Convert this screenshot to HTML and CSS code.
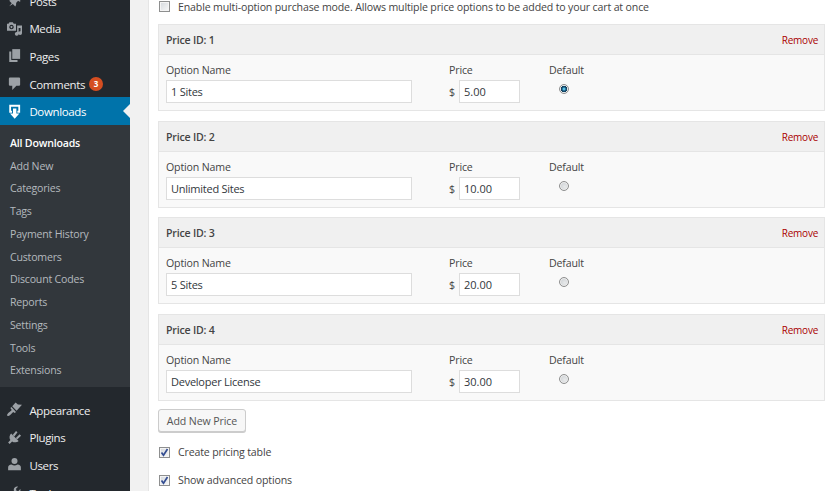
FILE: index.html
```html
<!DOCTYPE html>
<html lang="en">
<head>
<meta charset="utf-8">
<title>Downloads</title>
<link rel="stylesheet" href="styles.css">
</head>
<body>
<div class="app">
  <nav class="sidebar">
    <a class="item"><svg class="ico" viewBox="0 0 20 20"><path d="M10.4 3l-1 1.6 1.3 1.9-3 2.7c-1.700-.4-3.500.1-4.700 1.100l3.300 3.200L3 17.500l4.800-2.700 3.200 3.300c1.100-1.300 1.500-3 1.100-4.700l2.700-3 1.900 1.300 1.600-1z"/></svg><span>Posts</span></a>
    <a class="item"><svg class="ico" viewBox="0 0 20 20"><path fill-rule="evenodd" d="M0 3.500h2L3.300 1.500h4.400L9 3.500h3V13H0zM6 5a3 3 0 1 0 .01 0zM6 6.700a1.300 1.300 0 1 1-.01 0z"/><path d="M13.500 6H20v10a2.500 2.500 0 1 1-2-2.400V9.200h-2.500V17a2.500 2.500 0 1 1-2-2.400z"/></svg><span>Media</span></a>
    <a class="item"><svg class="ico" viewBox="0 0 20 20"><path d="M7 1.500H17.500v13H7z"/><path d="M3 4.500h2.700v11.500H14V18.500H3z"/></svg><span>Pages</span></a>
    <a class="item"><svg class="ico" viewBox="0 0 20 20"><path d="M4 2h12q1.500 0 1.500 1.500v8Q17.500 13 16 13h-3.500L7 18.500V13H4q-1.500 0-1.500-1.500v-8Q2.500 2 4 2z"/></svg><span>Comments</span><b class="badge">3</b></a>
    <a class="item current"><svg class="ico" viewBox="0 0 20 20"><path d="M3 1h14.500v10.500h-3.700V9h1.300V3.500H5.400V9h1.300v2.500H3z"/><path d="M8 6h4.500v6.500h4L10.250 19.500 4 12.500h4z"/></svg><span>Downloads</span></a>
    <div class="submenu">
      <a class="on">All Downloads</a><a>Add New</a><a>Categories</a><a>Tags</a><a>Payment History</a><a>Customers</a><a>Discount Codes</a><a>Reports</a><a>Settings</a><a>Tools</a><a>Extensions</a>
    </div>
    <a class="item"><svg class="ico" viewBox="0 0 20 20"><path d="M7 5.500L11.500.5l3 2.700L20 3.500l-7.200 8.200z"/><path d="M6 6.600l6 6.600-1.700 1.500-2-1.500C6 15 4 18 1.800 18.800c-1.500.2-2.300-1-1.500-2.300C1.800 14 5 12.800 6.300 10.800L4.500 8z"/></svg><span>Appearance</span></a>
    <a class="item"><svg class="ico" viewBox="0 0 20 20"><path d="M5.500 4.500l10 10c-2.500 2.200-6 2.600-8.700.8L3.500 18.500 1.500 16.500l3-3.200C2.700 10.500 3 7 5.500 4.500z"/><path d="M7.500 6.500l4.500-5.200 2 1.800L9.800 8.500zM11.800 10.500l5-4.700 1.900 2-5.200 4.700z"/></svg><span>Plugins</span></a>
    <a class="item"><svg class="ico" viewBox="0 0 20 20"><circle cx="10" cy="5.300" r="4"/><path d="M1.500 17.500v-3.500q0-3.500 4.500-4 4 2.500 8 0 4.500 .5 4.500 4v3.500z"/></svg><span>Users</span></a>
    <a class="item"><svg class="ico" viewBox="0 0 20 20"><path d="M16.700 9.500c-1.300 1.300-3 1.600-4.600 1L5.500 17.500c-1 1-2 1-3 0s-1-2 0-3L9.300 8C8.700 6.300 9 4.600 10.300 3.300c1.200-1.200 2.900-1.600 4.400-1.100L12 5l.6 2.500 2.500.6 2.700-2.800c.5 1.500.1 3-1.100 4.200z"/></svg><span>Tools</span></a>
  </nav>
  <main class="panel">
    <label class="check first"><i class="box"></i><span class="long">Enable multi-option purchase mode. Allows multiple price options to be added to your cart at once</span></label>
    <section class="price">
      <header><b>Price ID: 1</b><a>Remove</a></header>
      <div class="row">
        <div class="c1"><label>Option Name</label><div class="input">1 Sites</div></div>
        <div class="c2"><label>Price</label><div class="amt"><span>$</span><div class="input">5.00</div></div></div>
        <div class="c3"><label>Default</label><i class="radio sel"></i></div>
      </div>
    </section>
    <section class="price">
      <header><b>Price ID: 2</b><a>Remove</a></header>
      <div class="row">
        <div class="c1"><label>Option Name</label><div class="input">Unlimited Sites</div></div>
        <div class="c2"><label>Price</label><div class="amt"><span>$</span><div class="input">10.00</div></div></div>
        <div class="c3"><label>Default</label><i class="radio"></i></div>
      </div>
    </section>
    <section class="price">
      <header><b>Price ID: 3</b><a>Remove</a></header>
      <div class="row">
        <div class="c1"><label>Option Name</label><div class="input">5 Sites</div></div>
        <div class="c2"><label>Price</label><div class="amt"><span>$</span><div class="input">20.00</div></div></div>
        <div class="c3"><label>Default</label><i class="radio"></i></div>
      </div>
    </section>
    <section class="price">
      <header><b>Price ID: 4</b><a>Remove</a></header>
      <div class="row">
        <div class="c1"><label>Option Name</label><div class="input">Developer License</div></div>
        <div class="c2"><label>Price</label><div class="amt"><span>$</span><div class="input">30.00</div></div></div>
        <div class="c3"><label>Default</label><i class="radio"></i></div>
      </div>
    </section>
    <div class="button">Add New Price</div>
    <label class="check second"><i class="box"><svg viewBox="0 0 9 9"><path d="M1.500 4.500l2 2.800L7.500 1"/></svg></i><span>Create pricing table</span></label>
    <label class="check third"><i class="box"><svg viewBox="0 0 9 9"><path d="M1.500 4.500l2 2.800L7.500 1"/></svg></i><span>Show advanced options</span></label>
  </main>
</div>
</body>
</html>
```
FILE: styles.css
```css
* { box-sizing: border-box; }
body { margin: 0; background: #f1f1f1; font-family: "Open Sans", "Noto Sans", sans-serif; font-size: 10.6px; letter-spacing: -0.155px; color: #444; }
.app { display: flex; height: 491px; overflow: hidden; white-space: nowrap; }
.sidebar { width: 130px; flex: none; background: #23282d; margin-top: -13px; }
.item { display: flex; align-items: center; height: 27.6px; padding-left: 7px; color: #eee; font-size: 11.5px; letter-spacing: -0.36px; position: relative; }
.item span { padding-top: 1px; }
.ico { width: 15px; height: 15px; margin-right: 7.4px; fill: #9ca1a6; flex: none; }
.badge { width: 14px; height: 14px; border-radius: 7px; background: #d54e21; color: #fff; font-size: 8px; line-height: 14px; text-align: center; margin-left: 4px; letter-spacing: 0; }
.current { background: #0073aa; color: #fff; }
.current .ico { fill: #fff; }
.current::after { content: ""; position: absolute; right: 0; top: 7px; border: 7px solid transparent; border-right-color: #f1f1f1; border-left: 0; }
.submenu { background: #32373c; height: 262px; padding: 7px 0 0 10px; margin-bottom: 9px; }
.submenu a { display: block; height: 22.75px; line-height: 22.75px; color: #b4b9be; font-size: 10.6px; letter-spacing: -0.2px; }
.submenu .on { color: #fff; font-weight: 600; }
.panel { margin-left: 18px; flex: 1; border-left: 1px solid #e5e5e5; background: #fff; padding: 0 3px 0 9px; }
.check { display: flex; align-items: center; height: 14px; padding-left: 1px; }
.check span { margin-left: 8px; }
.box { width: 11px; height: 11px; border: 1px solid #8e8f8f; background: linear-gradient(135deg, #d4d8dc, #f8f8f8); box-shadow: inset 0 0 0 1px #f4f4f4; display: flex; flex: none; }
.box svg { width: 9px; height: 9px; fill: none; stroke: #344d91; stroke-width: 1.7; }
.first { margin-top: -1px; margin-bottom: 11px; }
.first span { padding-top: 1px; }
.price { height: 87px; border: 1px solid #e5e5e5; background: #f9f9f9; margin-bottom: 9.6px; }
.price header { display: flex; align-items: center; justify-content: space-between; height: 30px; border-bottom: 1px solid #e5e5e5; background: #f0f0f0; padding: 1px 6px 0 7px; }
.price b { font-weight: 600; letter-spacing: -0.2px; }
.price header a { color: #a00; font-size: 10px; letter-spacing: -0.25px; }
.row { display: flex; padding: 8px 7px 0; }
.row label { display: block; height: 14px; line-height: 14px; }
.c1 { width: 283px; }
.c2 { width: 100px; }
.input { width: 246px; height: 23px; border: 1px solid #ddd; background: #fff; line-height: 22px; padding-left: 4px; margin-top: 3px; font-size: 11px; letter-spacing: -0.25px; color: #32373c; }
.amt { display: flex; align-items: center; justify-content: space-between; width: 71px; }
.amt span { padding-top: 4px; }
.amt .input { width: 61px; padding-left: 4px; letter-spacing: 0; }
.radio { display: block; width: 10px; height: 10px; border: 1px solid #8e8f8f; border-radius: 50%; background: radial-gradient(circle at 60% 60%, #e8eaeb, #c4c8cc); box-shadow: inset 0 0 0 1px #eee; margin: 7px 0 0 9.5px; }
.sel { background: radial-gradient(circle, #5cc5e8 0 12%, #17557c 35%, #123e5c 52%, #eee 56%); box-shadow: none; }
.button { width: 88px; height: 23px; line-height: 22px; border: 1px solid #ccc; border-radius: 3px; background: #f7f7f7; box-shadow: 0 1px 0 #ccc; text-align: center; color: #555; margin-top: -1px; letter-spacing: -0.1px; }
.second { margin-top: 13px; }
.third { margin-top: 14px; }
```
